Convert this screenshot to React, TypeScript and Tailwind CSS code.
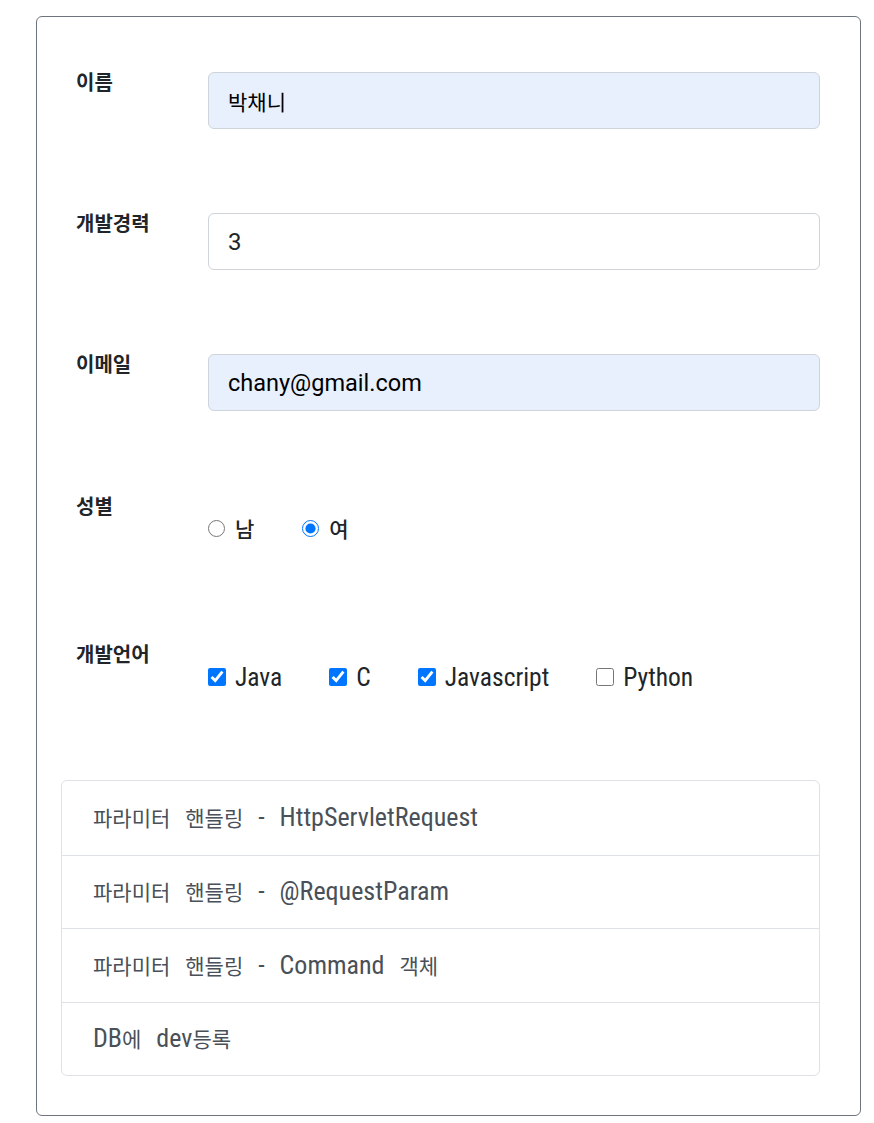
const latin = "font-['Roboto_Condensed','Noto_Sans_CJK_KR',sans-serif]";
const korean = "font-['Noto_Sans_CJK_KR',sans-serif]";

// Korean runs are drawn a touch smaller so they sit with the narrow Latin face
function Mixed({ text, ko }: { text: string; ko: string }) {
  const parts = text.split(/([\uAC00-\uD7A3]+)/);
  return (
    <>
      {parts.map((p, i) =>
        /[\uAC00-\uD7A3]/.test(p) ? (
          <span key={i} className={`${korean} ${ko}`}>
            {p}
          </span>
        ) : (
          <span key={i}>{p}</span>
        )
      )}
    </>
  );
}

function Row({ label, className = "", children }: { label: string; className?: string; children: React.ReactNode }) {
  return (
    <div className={`flex items-start ${className}`}>
      <label className={`w-[171px] shrink-0 pl-[39px] text-[20px] leading-[20px] font-bold text-[#212529] ${korean}`}>
        {label}
      </label>
      <div className="flex-1 pr-[40px]">{children}</div>
    </div>
  );
}

function TextInput({ value, autofill, size }: { value: string; autofill?: boolean; size: string }) {
  return (
    <input
      type="text"
      readOnly
      value={value}
      className={`block h-[57px] w-full rounded-[6px] border border-[#ced4da] px-[19px] font-['Roboto','Noto_Sans_CJK_KR',sans-serif] outline-none ${size} ${
        autofill ? "bg-[#e8f0fe] text-black" : "bg-white text-[#212529]"
      }`}
    />
  );
}

const langs = [
  { name: "Java", checked: true },
  { name: "C", checked: true },
  { name: "Javascript", checked: true },
  { name: "Python", checked: false },
];

const items = [
  "파라미터 핸들링 - HttpServletRequest",
  "파라미터 핸들링 - @RequestParam",
  "파라미터 핸들링 - Command 객체",
  "DB에 dev등록",
];

export default function App() {
  return (
    <div className={`min-h-[1123px] bg-white pl-[36px] pt-[16px] ${latin}`}>
      <div className="h-[1100px] w-[825px] rounded-[6px] border border-[#6c757d] pt-[55px]">
        <Row label="이름">
          <TextInput value="박채니" autofill size="text-[21px]" />
        </Row>
        <Row label="개발경력" className="mt-[84px]">
          <TextInput value="3" size="text-[24px]" />
        </Row>
        <Row label="이메일" className="mt-[84px]">
          <TextInput value="chany@gmail.com" autofill size="text-[23.5px]" />
        </Row>

        <Row label="성별" className="mt-[85px]">
          <div className={`flex items-center gap-[48px] pt-[20px] text-[21px] leading-[24px] font-medium text-[#212529] ${korean}`}>
            <label className="flex items-center gap-[10px]">
              <input type="radio" name="gender" className="m-0 h-[17px] w-[17px]" />
              남
            </label>
            <label className="flex items-center gap-[10px]">
              <input type="radio" name="gender" defaultChecked className="m-0 h-[17px] w-[17px]" />
              여
            </label>
          </div>
        </Row>

        <Row label="개발언어" className="mt-[104px]">
          <div className="flex items-center gap-[47px] pt-[19px] text-[25.5px] leading-[28px] text-[#212529]">
            {langs.map((l) => (
              <label key={l.name} className="flex items-center gap-[9px]">
                <input type="checkbox" defaultChecked={l.checked} className="m-0 h-[18px] w-[18px]" />
                {l.name}
              </label>
            ))}
          </div>
        </Row>

        <ul className="ml-[24px] mr-[40px] mt-[89px] rounded-[6px] border border-[#dee2e6]">
          {items.map((t, i) => (
            <li
              key={t}
              className={`flex h-[73.5px] items-center px-[31px] text-[26px] text-[#495057] [word-spacing:9px] ${
                i > 0 ? "border-t border-[#dee2e6]" : ""
              }`}
            >
              <span>
                <Mixed text={t} ko="text-[21px]" />
              </span>
            </li>
          ))}
        </ul>
      </div>
    </div>
  );
}
